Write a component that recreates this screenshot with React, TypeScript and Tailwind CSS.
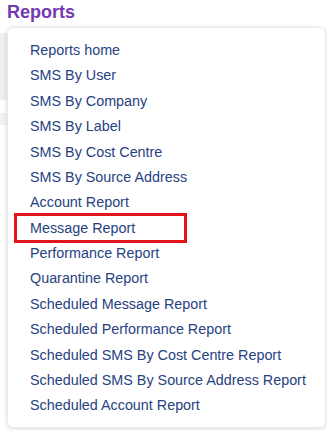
const items = [
  "Reports home",
  "SMS By User",
  "SMS By Company",
  "SMS By Label",
  "SMS By Cost Centre",
  "SMS By Source Address",
  "Account Report",
  "Message Report",
  "Performance Report",
  "Quarantine Report",
  "Scheduled Message Report",
  "Scheduled Performance Report",
  "Scheduled SMS By Cost Centre Report",
  "Scheduled SMS By Source Address Report",
  "Scheduled Account Report",
]

export default function App() {
  return (
    <div className="relative w-[327px] h-[430px] overflow-hidden bg-white font-['Liberation_Sans',Arial,sans-serif]">
      {/* page behind the menu */}
      <h1 className="pl-[7px] pt-[2px] text-[18px] leading-[21px] font-bold text-[#7339b3]">Reports</h1>
      <div className="mt-[10px] h-[67px] w-[40px] bg-[#f0f0f0]" />
      <div className="mt-[13px] h-[12px] w-[40px] bg-[#f3f3f3]" />

      {/* dropdown */}
      <div className="absolute left-[7px] top-[27px] w-[319px] h-[401px] rounded-[6px] border border-[#ebebeb] bg-white shadow-[0_1px_5px_rgba(0,0,0,0.15)] pt-[10px] pl-[22px]">
        <ul className="flex flex-col">
          {items.map((item) => (
            <li key={item} className="relative h-[25.4px] flex items-center text-[14.35px] text-[#27427f]">
              {item === "Message Report" && (
                <span className="absolute left-[-16px] top-[-2.5px] w-[173px] h-[30px] border-[3px] border-[#e3141c]" />
              )}
              <span>{item}</span>
            </li>
          ))}
        </ul>
      </div>
    </div>
  )
}
